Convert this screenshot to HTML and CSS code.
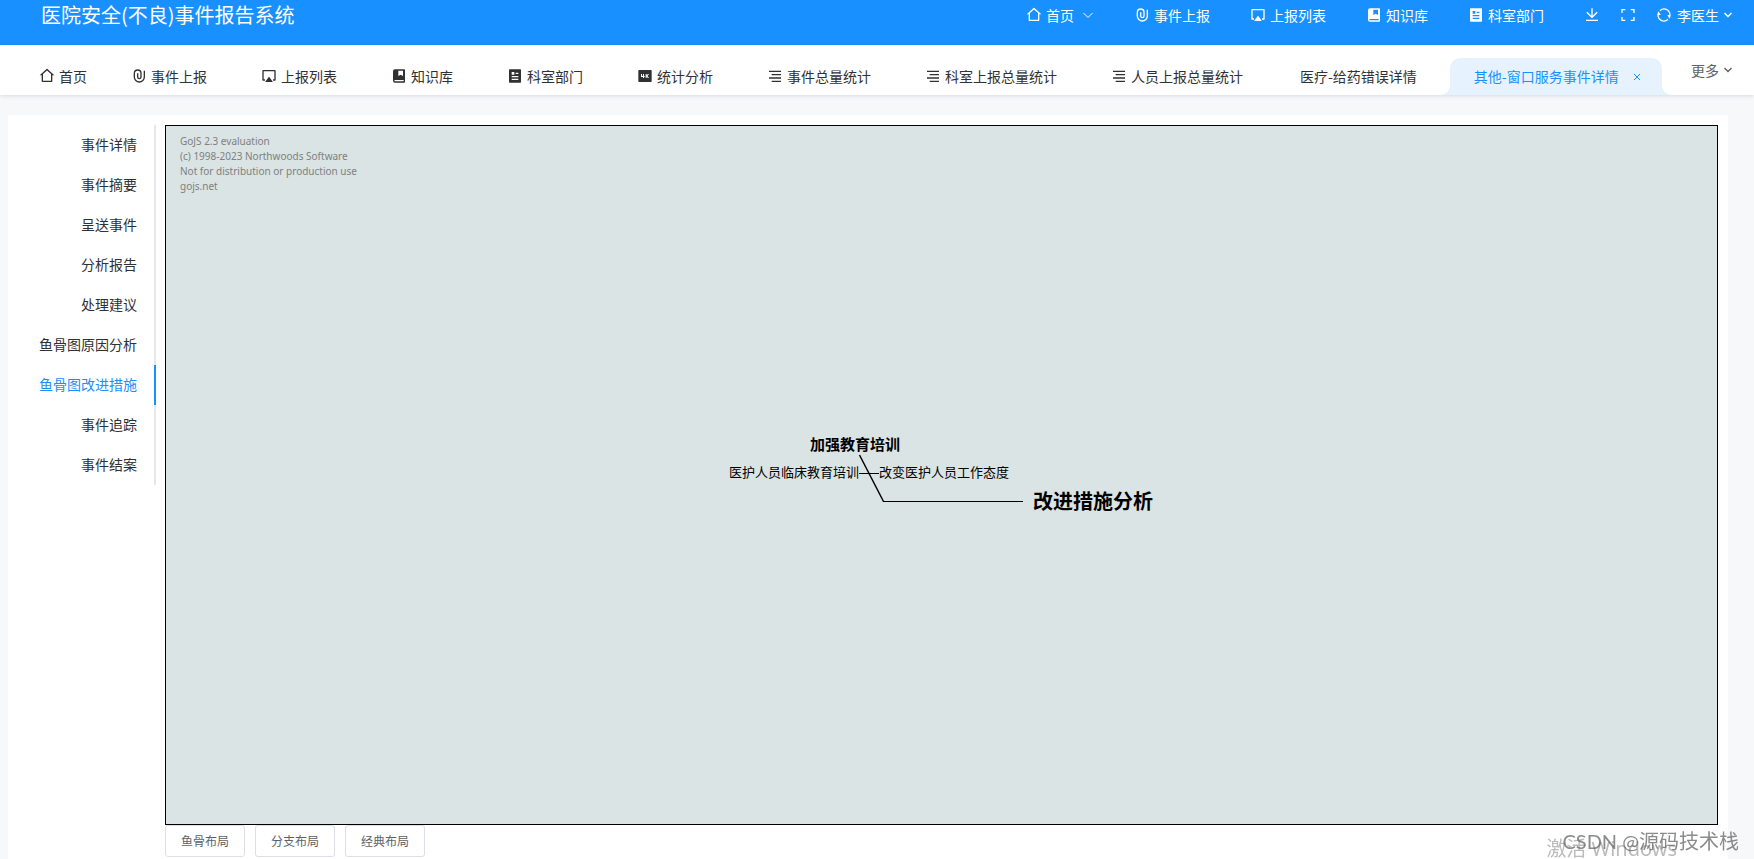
FILE: index.html
```html
<!DOCTYPE html>
<html lang="zh-CN">
<head>
<meta charset="utf-8">
<title>医院安全(不良)事件报告系统</title>
<link rel="stylesheet" href="styles.css">
</head>
<body>
<svg class="sprite" aria-hidden="true">
  <symbol id="i-home" viewBox="0 0 24 24"><path d="M19 21H5a1 1 0 0 1-1-1v-9H1l10.327-9.388a1 1 0 0 1 1.346 0L23 11h-3v9a1 1 0 0 1-1 1zM6 19h12V9.157l-6-5.454-6 5.454V19z"/></symbol>
  <symbol id="i-clip" viewBox="0 0 24 24"><path d="M14 13.5V8a4 4 0 1 0-8 0v5.5a6.5 6.5 0 1 0 13 0V4h2v9.5a8.5 8.5 0 1 1-17 0V8a6 6 0 1 1 12 0v5.5a3.5 3.5 0 0 1-7 0V8h2v5.5a1.5 1.5 0 0 0 3 0z"/></symbol>
  <symbol id="i-airplay" viewBox="0 0 24 24"><path d="M12.4 13.533l5 6.667a.5.5 0 0 1-.4.8H7a.5.5 0 0 1-.4-.8l5-6.667a.5.5 0 0 1 .8 0zM18 19v-2h2V5H4v12h2v2H2.992A.994.994 0 0 1 2 18V4c0-.552.455-1 .992-1h18.016c.548 0 .992.445.992 1v14c0 .552-.455 1-.992 1H18z"/></symbol>
  <symbol id="i-book" viewBox="0 0 24 24"><path d="M20 22H6a3 3 0 0 1-3-3V5a3 3 0 0 1 3-3h14a1 1 0 0 1 1 1v18a1 1 0 0 1-1 1zm-1-2v-2H6a1 1 0 0 0 0 2h13zM11 4v8l3.500-2L18 12V4h-7z"/></symbol>
  <symbol id="i-article" viewBox="0 0 24 24"><path d="M20 22H4a1 1 0 0 1-1-1V3a1 1 0 0 1 1-1h16a1 1 0 0 1 1 1v18a1 1 0 0 1-1 1zM7 6v4h4V6H7zm0 6v2h10v-2H7zm0 4v2h10v-2H7zm6-9v2h4V7h-4z"/></symbol>
  <symbol id="i-4k" viewBox="0 0 24 24"><path d="M3 3h18a1 1 0 0 1 1 1v16a1 1 0 0 1-1 1H3a1 1 0 0 1-1-1V4a1 1 0 0 1 1-1zm8.500 10.500V12h-1V9H9v3H7.500V9H6v4.500h3V15h1.500v-1.500h1zm6.500 1.500l-2.250-3L18 9h-1.750l-1.750 2.250V9H13v6h1.500v-2.250L16.250 15H18z"/></symbol>
  <symbol id="i-lines" viewBox="0 0 24 24"><path d="M3 4h18v2H3V4zm4 15h14v2H7v-2zm-4-5h18v2H3v-2zm4-5h14v2H7V9z"/></symbol>
  <symbol id="i-download" viewBox="0 0 24 24"><path d="M3 19h18v2H3v-2zm10-5.828L19.071 7.100l1.414 1.414L12 17 3.515 8.515 4.929 7.100 11 13.170V2h2v11.172z"/></symbol>
  <symbol id="i-full" viewBox="0 0 24 24"><path d="M20 3h2v6h-2V5h-4V3h4zM4 3h4v2H4v4H2V3h2zm16 16v-4h2v6h-6v-2h4zM4 19h4v2H2v-6h2v4z"/></symbol>
  <symbol id="i-refresh" viewBox="0 0 24 24"><path d="M5.463 4.433A9.961 9.961 0 0 1 12 2c5.523 0 10 4.477 10 10 0 2.136-.67 4.116-1.810 5.740L17 12h3A8 8 0 0 0 6.460 6.228l-.997-1.795zm13.074 15.134A9.961 9.961 0 0 1 12 22C6.477 22 2 17.523 2 12c0-2.136.67-4.116 1.810-5.740L7 12H4a8 8 0 0 0 13.540 5.772l.997 1.795z"/></symbol>
  <symbol id="i-thin-down" viewBox="0 0 12 12"><path d="M1.500 4L6 8.500 10.500 4" fill="none" stroke="currentColor"/></symbol>
  <symbol id="i-down" viewBox="0 0 12 12"><path d="M2.500 4L6 7.500 9.500 4" fill="none" stroke="currentColor" stroke-width="1.400"/></symbol>
  <symbol id="i-close" viewBox="0 0 12 12"><path d="M3 3l6 6M9 3l-6 6" fill="none" stroke="currentColor"/></symbol>
</svg>

<header class="header">
  <h1 class="brand">医院安全(不良)事件报告系统</h1>
  <nav class="menu">
    <a class="item" href="#"><svg class="icon"><use href="#i-home"/></svg>首页<svg class="arrow arrow-menu"><use href="#i-thin-down"/></svg></a>
    <a class="item" href="#"><svg class="icon"><use href="#i-clip"/></svg>事件上报</a>
    <a class="item" href="#"><svg class="icon"><use href="#i-airplay"/></svg>上报列表</a>
    <a class="item" href="#"><svg class="icon"><use href="#i-book"/></svg>知识库</a>
    <a class="item" href="#"><svg class="icon"><use href="#i-article"/></svg>科室部门</a>
  </nav>
  <div class="tools">
    <button class="tool" type="button" aria-label="下载"><svg class="icon"><use href="#i-download"/></svg></button>
    <button class="tool" type="button" aria-label="全屏"><svg class="icon"><use href="#i-full"/></svg></button>
    <button class="tool" type="button" aria-label="刷新"><svg class="icon"><use href="#i-refresh"/></svg></button>
    <button class="tool user" type="button">李医生<svg class="arrow"><use href="#i-down"/></svg></button>
  </div>
</header>

<div class="tabbar">
  <nav class="tabs">
    <a class="tab pinned" href="#"><svg class="icon"><use href="#i-home"/></svg>首页</a>
    <a class="tab" href="#"><svg class="icon"><use href="#i-clip"/></svg>事件上报</a>
    <a class="tab" href="#"><svg class="icon"><use href="#i-airplay"/></svg>上报列表</a>
    <a class="tab" href="#"><svg class="icon"><use href="#i-book"/></svg>知识库</a>
    <a class="tab" href="#"><svg class="icon"><use href="#i-article"/></svg>科室部门</a>
    <a class="tab" href="#"><svg class="icon"><use href="#i-4k"/></svg>统计分析</a>
    <a class="tab" href="#"><svg class="icon"><use href="#i-lines"/></svg>事件总量统计</a>
    <a class="tab" href="#"><svg class="icon"><use href="#i-lines"/></svg>科室上报总量统计</a>
    <a class="tab" href="#"><svg class="icon"><use href="#i-lines"/></svg>人员上报总量统计</a>
    <a class="tab plain" href="#">医疗-给药错误详情</a>
    <div class="tab plain active"><a class="tab-link" href="#" aria-current="page">其他-窗口服务事件详情</a><button class="close" type="button" aria-label="关闭"><svg class="arrow"><use href="#i-close"/></svg></button></div>
  </nav>
  <button class="more" type="button">更多<svg class="arrow"><use href="#i-down"/></svg></button>
</div>

<main class="card">
  <nav class="side">
    <a class="side-item" href="#">事件详情</a>
    <a class="side-item" href="#">事件摘要</a>
    <a class="side-item" href="#">呈送事件</a>
    <a class="side-item" href="#">分析报告</a>
    <a class="side-item" href="#">处理建议</a>
    <a class="side-item" href="#">鱼骨图原因分析</a>
    <a class="side-item current" href="#">鱼骨图改进措施</a>
    <a class="side-item" href="#">事件追踪</a>
    <a class="side-item" href="#">事件结案</a>
  </nav>
  <section class="content">
    <div class="canvas">
      <p class="license">GoJS 2.3 evaluation<br>(c) 1998-2023 Northwoods Software<br>Not for distribution or production use<br>gojs.net</p>
      <svg class="fishbone" width="425" height="80" viewBox="0 0 425 80">
        <path class="bone" d="M130 38.500h20M154 66.500h140"/>
        <path class="bone rib" d="M130.500 20L154.500 66.500"/>
        <text class="cause" x="81" y="15">加强教育培训</text>
        <text class="detail" x="0" y="42">医护人员临床教育培训</text>
        <text class="detail" x="150" y="42">改变医护人员工作态度</text>
        <text class="head" x="304" y="74">改进措施分析</text>
      </svg>
    </div>
    <div class="actions">
      <button class="btn" type="button">鱼骨布局</button>
      <button class="btn" type="button">分支布局</button>
      <button class="btn" type="button">经典布局</button>
    </div>
  </section>
</main>
<div class="mark activate">激活 Windows</div>
<div class="mark author">CSDN @源码技术栈</div>
</body>
</html>
```
FILE: styles.css
```css
* { box-sizing: border-box; }

body {
  margin: 0;
  height: 100vh;
  overflow: hidden;
  display: flex;
  flex-direction: column;
  background: #f6f8f9;
  color: #303133;
  font: 14px/20px "Noto Sans CJK SC", sans-serif;
}

a { color: inherit; text-decoration: none; }

button {
  margin: 0;
  padding: 0;
  border: 0;
  background: none;
  color: inherit;
  font: inherit;
  cursor: pointer;
}

.sprite { position: absolute; width: 0; height: 0; }
.icon { width: 16px; height: 16px; flex: none; fill: currentColor; }
.arrow { width: 12px; height: 12px; flex: none; }

.header {
  flex: none;
  display: flex;
  align-items: center;
  padding: 0 20px 15px 41px;
  height: 45px;
  background: #1890ff;
  color: #fff;
}

.brand {
  margin: 0 auto 0 0;
  font-size: 20px;
  font-weight: 400;
  line-height: 30px;
  white-space: nowrap;
}

.menu { display: flex; gap: 40px; margin-right: 40px; }
.item { display: flex; align-items: center; gap: 4px; white-space: nowrap; }
.arrow-menu { margin-left: 4px; }

.tools { display: flex; align-items: center; gap: 20px; }
.tool { display: flex; align-items: center; gap: 3px; white-space: nowrap; }
.user { margin-left: -15px; }

.tabbar {
  flex: none;
  position: relative;
  display: flex;
  justify-content: space-between;
  height: 50px;
  padding: 0 20px 0 15px;
  background: #fff;
  box-shadow: 0 1px 4px rgba(0, 21, 41, .12);
}

.tabs { display: flex; align-items: flex-end; }

.tab {
  display: flex;
  align-items: center;
  gap: 4px;
  height: 37px;
  padding: 0 30px 2px 24px;
  white-space: nowrap;
}

.pinned { padding-right: 20px; }
.plain { margin-left: 3px; }

.active {
  position: relative;
  gap: 12px;
  padding-right: 19px;
  border-radius: 10px 10px 0 0;
  background: #e6f3ff;
  color: #1890ff;
}

.active::before,
.active::after {
  content: "";
  position: absolute;
  bottom: 0;
  width: 10px;
  height: 10px;
}

.active::before { right: 100%; background: radial-gradient(circle at 0 0, transparent 10px, #e6f3ff 10px); }
.active::after { left: 100%; background: radial-gradient(circle at 100% 0, transparent 10px, #e6f3ff 10px); }

.close { display: flex; padding-top: 2px; }

.more {
  display: flex;
  align-items: center;
  gap: 3px;
  height: 50px;
  color: #606266;
  white-space: nowrap;
}

.card {
  flex: 1;
  display: flex;
  align-items: stretch;
  gap: 9px;
  margin: 20px 26px 0 8px;
  padding: 10px 10px 2px;
  background: #fff;
}

.side { flex: none; align-self: flex-start; width: 138px; }

.side-item {
  display: block;
  padding: 0 17px 2px 0;
  border-right: 2px solid #e4e7ed;
  line-height: 38px;
  text-align: right;
}

.current { border-color: #1890ff; color: #1890ff; }

.content { flex: 1; display: flex; flex-direction: column; }

.canvas {
  flex: 1;
  position: relative;
  display: flex;
  align-items: center;
  justify-content: center;
  border: 1px solid #000;
  background: #dae4e4;
}

.license {
  position: absolute;
  top: 8px;
  left: 14px;
  margin: 0;
  color: #808080;
  font: 10px/15px "Noto Sans", sans-serif;
}

.fishbone { overflow: visible; }
.bone { fill: none; stroke: #000; }
.rib { stroke-width: 1.500; }
.cause { font-size: 15px; font-weight: 700; }
.detail { font-size: 13px; }
.head { font-size: 20px; font-weight: 700; }
.fishbone text { fill: #000; }

.actions { display: flex; gap: 10px; }

.btn {
  width: 80px;
  height: 32px;
  padding-bottom: 1px;
  border: 1px solid #dcdfe6;
  border-radius: 3px;
  background: #fff;
  color: #606266;
  font-size: 12px;
}

.mark { position: fixed; font-size: 20px; line-height: 24px; white-space: nowrap; pointer-events: none; }
.activate { right: 77px; bottom: -2px; color: #bbb; font-family: "Noto Sans", "Noto Sans CJK SC", sans-serif; }
.author { right: 15px; bottom: 6px; color: rgba(110, 110, 110, .8); font-family: Lato, "Noto Sans CJK SC", sans-serif; }
```
